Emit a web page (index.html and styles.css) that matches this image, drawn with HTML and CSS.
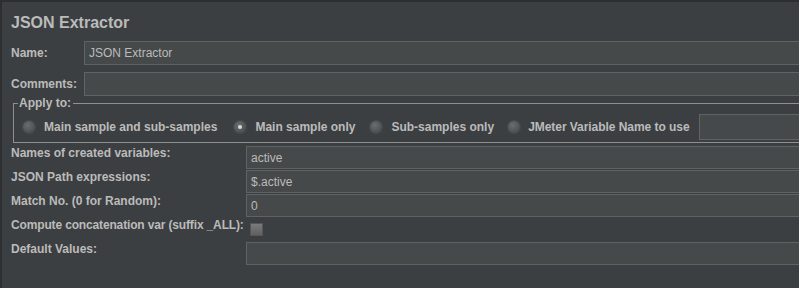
FILE: index.html
```html
<!DOCTYPE html>
<html lang="en">
<head>
  <meta charset="UTF-8" />
  <title>JSON Extractor</title>
  <link rel="stylesheet" href="styles.css">
</head>
<body>
  <div class="panel">
    <h1 class="title">JSON Extractor</h1>

    <!-- Name / Comments -->
    <div class="field-row">
      <label class="row-label">Name:</label>
      <div class="input">JSON Extractor</div>
    </div>
    <div class="field-row comments">
      <label class="row-label">Comments:</label>
      <div class="input"></div>
    </div>

    <!-- Scope -->
    <fieldset class="apply">
      <legend>Apply to:</legend>
      <div class="apply-row">
        <label class="radio-item"><span class="radio"></span>Main sample and sub-samples</label>
        <label class="radio-item"><span class="radio checked"></span>Main sample only</label>
        <label class="radio-item"><span class="radio"></span>Sub-samples only</label>
        <label class="radio-item"><span class="radio"></span>JMeter Variable Name to use</label>
        <div class="input var-name"></div>
      </div>
    </fieldset>

    <!-- Extractor properties -->
    <div class="props">
      <label class="prop-label">Names of created variables:</label>
      <div class="input small">active</div>

      <label class="prop-label">JSON Path expressions:</label>
      <div class="input small">$.active</div>

      <label class="prop-label">Match No. (0 for Random):</label>
      <div class="input small">0</div>

      <label class="prop-label tight">Compute concatenation var (suffix _ALL):</label>
      <div class="check-cell"><span class="checkbox"></span></div>

      <label class="prop-label">Default Values:</label>
      <div class="input small"></div>
    </div>
  </div>
</body>
</html>
```

FILE: styles.css
```css
/* Darcula-ish JMeter panel */
body {
  margin: 0;
  background-color: #3c3f41;
  color: #bbbbbb;
  font-family: 'Liberation Sans', Arial, sans-serif;
  font-size: 12px;
  overflow: hidden;
  height: 288px;
}

.panel {
  width: 100%;
  height: 288px;
  box-sizing: border-box;
  border-top: 2px solid #2c2e2f;
  border-left: 2px solid #2c2e2f;
  padding: 0 0 0 9px;
}

.title {
  margin: 0;
  padding-top: 11px;
  font-size: 16px;
  line-height: 20px;
  font-weight: bold;
  color: #bbbbbb;
}

/* Name / Comments rows */
.field-row {
  display: flex;
  align-items: center;
  margin-top: 8px;
  height: 24px;
}

.field-row.comments {
  margin-top: 7px;
}

.row-label {
  width: 73px;
  flex: none;
  font-weight: bold;
}

.input {
  flex: 1;
  min-width: 0;
  box-sizing: border-box;
  height: 24px;
  background-color: #45494a;
  border: 1px solid #5f6364;
  border-right: none;
  padding: 0 4px;
  display: flex;
  align-items: center;
  color: #bbbbbb;
  font-size: 12px;
}

/* Apply to group */
.apply {
  margin: 0 0 0 2px;
  padding: 4px 0 2px 4px;
  border: 1px solid #8e9090;
  border-right: none;
  min-width: 0;
}

.apply legend {
  padding: 0 2px 0 1px;
  line-height: 14px;
  font-weight: bold;
}

.apply-row {
  display: flex;
  align-items: center;
  padding-left: 5px;
}

.radio-item {
  display: flex;
  align-items: center;
  gap: 9px;
  margin-right: 17px;
  font-weight: bold;
  white-space: nowrap;
}

.radio-item:nth-child(2) {
  margin-right: 15px;
}

.radio-item:nth-child(3) {
  margin-right: 14px;
}

.radio-item:last-of-type {
  gap: 8px;
  margin-right: 9px;
  letter-spacing: -0.05px;
}

.radio {
  width: 12px;
  height: 12px;
  border-radius: 50%;
  background: radial-gradient(circle at 40% 35%, #6a6d6e, #4e5152 70%);
  box-shadow: 0 0 0 1px #484b4c;
  position: relative;
}

.radio.checked::after {
  content: '';
  position: absolute;
  left: 4px;
  top: 4px;
  width: 4px;
  height: 4px;
  border-radius: 50%;
  background: #d8d8d8;
}

.input.var-name {
  height: 26px;
}

/* Property grid */
.props {
  display: grid;
  grid-template-columns: 235px 1fr;
  grid-auto-rows: 23px;
  row-gap: 1px;
  margin-top: 3px;
}

.prop-label {
  font-weight: bold;
  line-height: 15px;
  white-space: nowrap;
}

.prop-label.tight {
  letter-spacing: -0.15px;
}

.input.small {
  height: 23px;
}

.check-cell {
  display: flex;
  align-items: center;
  padding-left: 4px;
}

.checkbox {
  width: 11px;
  height: 11px;
  background: linear-gradient(#7a7a7a, #606060);
  border: 1px solid #565656;
}
```
